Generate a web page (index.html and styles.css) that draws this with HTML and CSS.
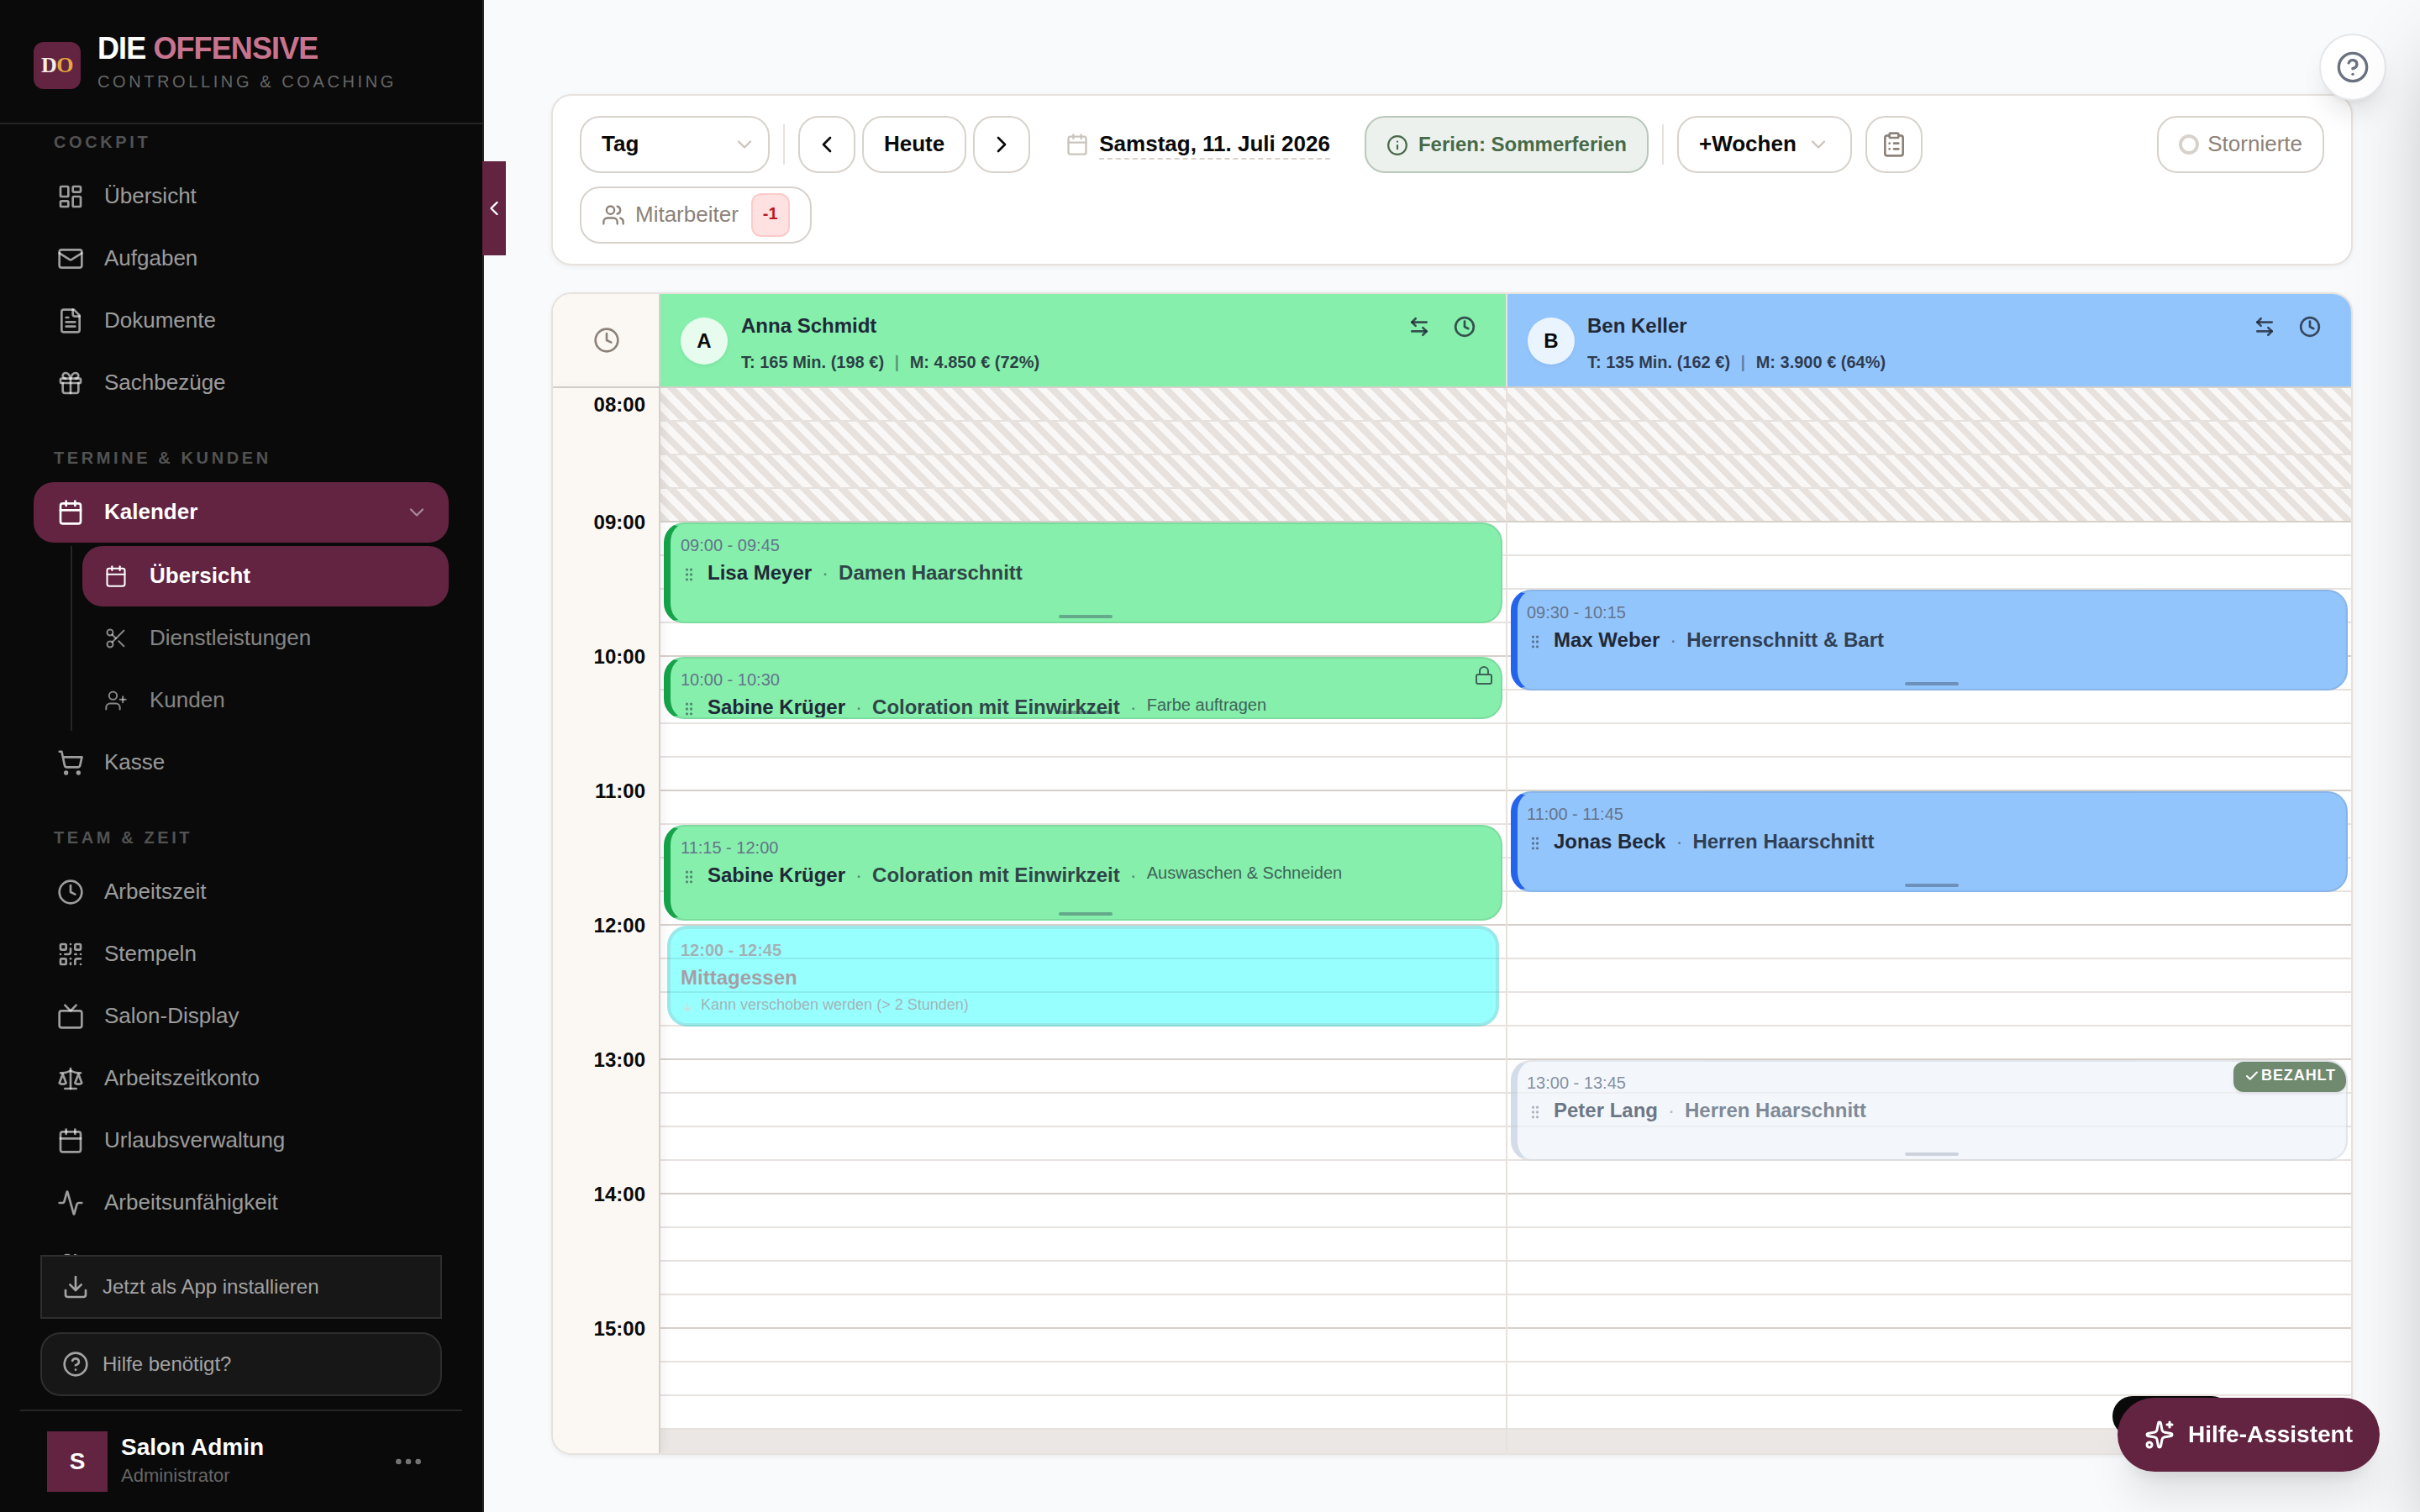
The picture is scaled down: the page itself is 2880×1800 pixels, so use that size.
FILE: index.html
```
<!DOCTYPE html>
<html lang="de">

<head>
  <meta charset="UTF-8" />
  <meta name="viewport" content="width=device-width, initial-scale=1.0" />
  <title>Kalender - Die Offensive</title>
  <link rel="stylesheet" href="styles.css">
</head>

<body>
  <!-- Icons -->
  <svg class="sprite" aria-hidden="true">
    <symbol id="i-dashboard" viewBox="0 0 24 24"><rect width="7" height="9" x="3" y="3" rx="1"/><rect width="7" height="5" x="14" y="3" rx="1"/><rect width="7" height="9" x="14" y="12" rx="1"/><rect width="7" height="5" x="3" y="16" rx="1"/></symbol>
    <symbol id="i-mail" viewBox="0 0 24 24"><rect width="20" height="16" x="2" y="4" rx="2"/><path d="m22 7-8.991 5.727a2 2 0 0 1-2.009 0L2 7"/></symbol>
    <symbol id="i-file" viewBox="0 0 24 24"><path d="M15 2H6a2 2 0 0 0-2 2v16a2 2 0 0 0 2 2h12a2 2 0 0 0 2-2V7Z"/><path d="M14 2v4a2 2 0 0 0 2 2h4"/><path d="M10 9H8"/><path d="M16 13H8"/><path d="M16 17H8"/></symbol>
    <symbol id="i-gift" viewBox="0 0 24 24"><rect x="3" y="8" width="18" height="4" rx="1"/><path d="M12 8v13"/><path d="M19 12v7a2 2 0 0 1-2 2H7a2 2 0 0 1-2-2v-7"/><path d="M7.5 8a2.5 2.5 0 0 1 0-5A4.8 8 0 0 1 12 8a4.8 8 0 0 1 4.5-5 2.5 2.5 0 0 1 0 5"/></symbol>
    <symbol id="i-calendar" viewBox="0 0 24 24"><path d="M8 2v4"/><path d="M16 2v4"/><rect width="18" height="18" x="3" y="4" rx="2"/><path d="M3 10h18"/></symbol>
    <symbol id="i-scissors" viewBox="0 0 24 24"><circle cx="6" cy="6" r="3"/><path d="M8.12 8.12 12 12"/><path d="M20 4 8.12 15.88"/><circle cx="6" cy="18" r="3"/><path d="M14.8 14.8 20 20"/></symbol>
    <symbol id="i-user-plus" viewBox="0 0 24 24"><path d="M16 21v-2a4 4 0 0 0-4-4H6a4 4 0 0 0-4 4v2"/><circle cx="9" cy="7" r="4"/><path d="M19 8v6"/><path d="M22 11h-6"/></symbol>
    <symbol id="i-cart" viewBox="0 0 24 24"><circle cx="8" cy="21" r="1"/><circle cx="19" cy="21" r="1"/><path d="M2.05 2.05h2l2.66 12.42a2 2 0 0 0 2 1.58h9.78a2 2 0 0 0 1.95-1.57l1.65-7.43H5.12"/></symbol>
    <symbol id="i-clock" viewBox="0 0 24 24"><circle cx="12" cy="12" r="10"/><path d="M12 6v6l4 2"/></symbol>
    <symbol id="i-qr" viewBox="0 0 24 24"><rect width="5" height="5" x="3" y="3" rx="1"/><rect width="5" height="5" x="16" y="3" rx="1"/><rect width="5" height="5" x="3" y="16" rx="1"/><path d="M21 16h-3a2 2 0 0 0-2 2v3"/><path d="M21 21v.01"/><path d="M12 7v3a2 2 0 0 1-2 2H7"/><path d="M3 12h.01"/><path d="M12 3h.01"/><path d="M12 16v.01"/><path d="M16 12h1"/><path d="M21 12v.01"/><path d="M12 21v-1"/></symbol>
    <symbol id="i-tv" viewBox="0 0 24 24"><rect width="20" height="15" x="2" y="7" rx="2"/><path d="m17 2-5 5-5-5"/></symbol>
    <symbol id="i-scale" viewBox="0 0 24 24"><path d="m16 16 3-8 3 8c-.87.65-1.92 1-3 1s-2.13-.35-3-1Z"/><path d="m2 16 3-8 3 8c-.87.65-1.92 1-3 1s-2.13-.35-3-1Z"/><path d="M7 21h10"/><path d="M12 3v18"/><path d="M3 7h2c2 0 5-1 7-2 2 1 5 2 7 2h2"/></symbol>
    <symbol id="i-activity" viewBox="0 0 24 24"><path d="M22 12h-2.48a2 2 0 0 0-1.93 1.46l-2.35 8.36a.25.25 0 0 1-.48 0L9.24 2.18a.25.25 0 0 0-.48 0l-2.35 8.36A2 2 0 0 1 4.49 12H2"/></symbol>
    <symbol id="i-users" viewBox="0 0 24 24"><path d="M16 21v-2a4 4 0 0 0-4-4H6a4 4 0 0 0-4 4v2"/><circle cx="9" cy="7" r="4"/><path d="M22 21v-2a4 4 0 0 0-3-3.87"/><path d="M16 3.13a4 4 0 0 1 0 7.75"/></symbol>
    <symbol id="i-download" viewBox="0 0 24 24"><path d="M21 15v4a2 2 0 0 1-2 2H5a2 2 0 0 1-2-2v-4"/><path d="m7 10 5 5 5-5"/><path d="M12 15V3"/></symbol>
    <symbol id="i-help" viewBox="0 0 24 24"><circle cx="12" cy="12" r="10"/><path d="M9.09 9a3 3 0 0 1 5.83 1c0 2-3 3-3 3"/><path d="M12 17h.01"/></symbol>
    <symbol id="i-info" viewBox="0 0 24 24"><circle cx="12" cy="12" r="10"/><path d="M12 16v-4"/><path d="M12 8h.01"/></symbol>
    <symbol id="i-dots" viewBox="0 0 24 24"><circle cx="12" cy="12" r="1"/><circle cx="19" cy="12" r="1"/><circle cx="5" cy="12" r="1"/></symbol>
    <symbol id="i-left" viewBox="0 0 24 24"><path d="m15 18-6-6 6-6"/></symbol>
    <symbol id="i-right" viewBox="0 0 24 24"><path d="m9 18 6-6-6-6"/></symbol>
    <symbol id="i-down" viewBox="0 0 24 24"><path d="m6 9 6 6 6-6"/></symbol>
    <symbol id="i-clipboard" viewBox="0 0 24 24"><rect width="8" height="4" x="8" y="2" rx="1"/><path d="M16 4h2a2 2 0 0 1 2 2v14a2 2 0 0 1-2 2H6a2 2 0 0 1-2-2V6a2 2 0 0 1 2-2h2"/><path d="M12 11h4"/><path d="M12 16h4"/><path d="M8 11h.01"/><path d="M8 16h.01"/></symbol>
    <symbol id="i-swap" viewBox="0 0 24 24"><path d="M8 3 4 7l4 4"/><path d="M4 7h16"/><path d="m16 21 4-4-4-4"/><path d="M20 17H4"/></symbol>
    <symbol id="i-grip" viewBox="0 0 24 24"><circle cx="9" cy="12" r="1"/><circle cx="9" cy="5" r="1"/><circle cx="9" cy="19" r="1"/><circle cx="15" cy="12" r="1"/><circle cx="15" cy="5" r="1"/><circle cx="15" cy="19" r="1"/></symbol>
    <symbol id="i-lock" viewBox="0 0 24 24"><rect width="18" height="11" x="3" y="11" rx="2"/><path d="M7 11V7a5 5 0 0 1 10 0v4"/></symbol>
    <symbol id="i-arrow-down" viewBox="0 0 24 24"><path d="M12 5v14"/><path d="m19 12-7 7-7-7"/></symbol>
    <symbol id="i-check" viewBox="0 0 24 24"><path d="M20 6 9 17l-5-5"/></symbol>
    <symbol id="i-sparkles" viewBox="0 0 24 24"><path d="M11.017 2.814a1 1 0 0 1 1.966 0l1.051 5.558a2 2 0 0 0 1.594 1.594l5.558 1.051a1 1 0 0 1 0 1.966l-5.558 1.051a2 2 0 0 0-1.594 1.594l-1.051 5.558a1 1 0 0 1-1.966 0l-1.051-5.558a2 2 0 0 0-1.594-1.594l-5.558-1.051a1 1 0 0 1 0-1.966l5.558-1.051a2 2 0 0 0 1.594-1.594z"/><path d="M20 2v4"/><path d="M22 4h-4"/><circle cx="4" cy="20" r="2"/></symbol>
  </svg>

  <div class="app">
    <aside class="sidebar">
      <div class="brand">
        <div class="brand-logo"><span>D</span><span class="gold">O</span></div>
        <div class="brand-text">
          <div class="brand-name">DIE <span>OFFENSIVE</span></div>
          <div class="brand-sub">CONTROLLING &amp; COACHING</div>
        </div>
      </div>

      <nav class="nav">
        <div class="nav-section">
          <div class="nav-title">COCKPIT</div>
          <a class="nav-item"><svg class="icon"><use href="#i-dashboard"/></svg>Übersicht</a>
          <a class="nav-item"><svg class="icon"><use href="#i-mail"/></svg>Aufgaben</a>
          <a class="nav-item"><svg class="icon"><use href="#i-file"/></svg>Dokumente</a>
          <a class="nav-item"><svg class="icon"><use href="#i-gift"/></svg>Sachbezüge</a>
        </div>
        <div class="nav-section">
          <div class="nav-title">TERMINE &amp; KUNDEN</div>
          <a class="nav-item active"><svg class="icon"><use href="#i-calendar"/></svg>Kalender<svg class="icon caret"><use href="#i-down"/></svg></a>
          <div class="subnav">
            <a class="nav-item active"><svg class="icon"><use href="#i-calendar"/></svg>Übersicht</a>
            <a class="nav-item"><svg class="icon"><use href="#i-scissors"/></svg>Dienstleistungen</a>
            <a class="nav-item"><svg class="icon"><use href="#i-user-plus"/></svg>Kunden</a>
          </div>
          <a class="nav-item"><svg class="icon"><use href="#i-cart"/></svg>Kasse</a>
        </div>
        <div class="nav-section">
          <div class="nav-title">TEAM &amp; ZEIT</div>
          <a class="nav-item"><svg class="icon"><use href="#i-clock"/></svg>Arbeitszeit</a>
          <a class="nav-item"><svg class="icon"><use href="#i-qr"/></svg>Stempeln</a>
          <a class="nav-item"><svg class="icon"><use href="#i-tv"/></svg>Salon-Display</a>
          <a class="nav-item"><svg class="icon"><use href="#i-scale"/></svg>Arbeitszeitkonto</a>
          <a class="nav-item"><svg class="icon"><use href="#i-calendar"/></svg>Urlaubsverwaltung</a>
          <a class="nav-item"><svg class="icon"><use href="#i-activity"/></svg>Arbeitsunfähigkeit</a>
          <a class="nav-item"><svg class="icon"><use href="#i-users"/></svg></a>
        </div>
      </nav>

      <div class="side-actions">
        <button class="side-btn"><svg class="icon"><use href="#i-download"/></svg>Jetzt als App installieren</button>
        <button class="side-btn rounded"><svg class="icon"><use href="#i-help"/></svg>Hilfe benötigt?</button>
      </div>

      <div class="user">
        <div class="user-avatar">S</div>
        <div class="user-info">
          <div class="user-name">Salon Admin</div>
          <div class="user-role">Administrator</div>
        </div>
        <svg class="icon user-menu"><use href="#i-dots"/></svg>
      </div>

      <button class="collapse"><svg class="icon"><use href="#i-left"/></svg></button>
    </aside>

    <main class="main">
      <div class="toolbar">
        <div class="toolbar-row">
          <button class="btn select">Tag<svg class="icon muted"><use href="#i-down"/></svg></button>
          <span class="divider"></span>
          <div class="pager">
            <button class="btn square"><svg class="icon"><use href="#i-left"/></svg></button>
            <button class="btn">Heute</button>
            <button class="btn square"><svg class="icon"><use href="#i-right"/></svg></button>
          </div>
          <div class="date"><svg class="icon muted"><use href="#i-calendar"/></svg><span>Samstag, 11. Juli 2026</span></div>
          <div class="btn holiday"><svg class="icon"><use href="#i-info"/></svg>Ferien: Sommerferien</div>
          <span class="divider"></span>
          <button class="btn weeks">+Wochen<svg class="icon muted"><use href="#i-down"/></svg></button>
          <button class="btn square soft"><svg class="icon"><use href="#i-clipboard"/></svg></button>
          <button class="btn soft cancelled"><span class="ring"></span>Stornierte</button>
        </div>
        <div class="toolbar-row">
          <button class="btn soft staff"><svg class="icon"><use href="#i-users"/></svg>Mitarbeiter<span class="count">-1</span></button>
        </div>
      </div>

      <div class="calendar">
        <div class="cal-head">
          <div class="corner"><svg class="icon"><use href="#i-clock"/></svg></div>
          <div class="person green">
            <div class="avatar">A</div>
            <div class="person-info">
              <div class="person-name">Anna Schmidt</div>
              <div class="person-stats">T: 165 Min. (198 €)<i>|</i>M: 4.850 € (72%)</div>
            </div>
            <div class="person-tools"><svg class="icon"><use href="#i-swap"/></svg><svg class="icon"><use href="#i-clock"/></svg></div>
          </div>
          <div class="person blue">
            <div class="avatar">B</div>
            <div class="person-info">
              <div class="person-name">Ben Keller</div>
              <div class="person-stats">T: 135 Min. (162 €)<i>|</i>M: 3.900 € (64%)</div>
            </div>
            <div class="person-tools"><svg class="icon"><use href="#i-swap"/></svg><svg class="icon"><use href="#i-clock"/></svg></div>
          </div>
        </div>

        <div class="cal-body">
          <div class="times">
            <div class="hour"><span>08:00</span></div>
            <div class="hour"><span>09:00</span></div>
            <div class="hour"><span>10:00</span></div>
            <div class="hour"><span>11:00</span></div>
            <div class="hour"><span>12:00</span></div>
            <div class="hour"><span>13:00</span></div>
            <div class="hour"><span>14:00</span></div>
            <div class="hour"><span>15:00</span></div>
          </div>

          <div class="day">
            <div class="event green" style="top: 160px; height: 120px">
              <div class="event-time">09:00 - 09:45</div>
              <div class="event-row"><svg class="icon"><use href="#i-grip"/></svg><b>Lisa Meyer</b><i>·</i><span class="service">Damen Haarschnitt</span></div>
              <span class="handle"></span>
            </div>
            <div class="event green" style="top: 320px; height: 74px">
              <div class="event-time">10:00 - 10:30</div>
              <div class="event-row"><svg class="icon"><use href="#i-grip"/></svg><b>Sabine Krüger</b><i>·</i><span class="service">Coloration mit Einwirkzeit</span><i>·</i><span class="step">Farbe auftragen</span></div>
              <svg class="icon lock"><use href="#i-lock"/></svg>
              <span class="handle"></span>
            </div>
            <div class="event green" style="top: 520px; height: 114px">
              <div class="event-time">11:15 - 12:00</div>
              <div class="event-row"><svg class="icon"><use href="#i-grip"/></svg><b>Sabine Krüger</b><i>·</i><span class="service">Coloration mit Einwirkzeit</span><i>·</i><span class="step">Auswaschen &amp; Schneiden</span></div>
              <span class="handle"></span>
            </div>
            <div class="break" style="top: 640px; height: 120px">
              <div class="break-time">12:00 - 12:45</div>
              <div class="break-title">Mittagessen</div>
              <div class="break-note"><svg class="icon"><use href="#i-arrow-down"/></svg><span>Kann verschoben werden (&gt; 2 Stunden)</span></div>
            </div>
          </div>

          <div class="day">
            <div class="event blue" style="top: 240px; height: 120px">
              <div class="event-time">09:30 - 10:15</div>
              <div class="event-row"><svg class="icon"><use href="#i-grip"/></svg><b>Max Weber</b><i>·</i><span class="service">Herrenschnitt &amp; Bart</span></div>
              <span class="handle"></span>
            </div>
            <div class="event blue" style="top: 480px; height: 120px">
              <div class="event-time">11:00 - 11:45</div>
              <div class="event-row"><svg class="icon"><use href="#i-grip"/></svg><b>Jonas Beck</b><i>·</i><span class="service">Herren Haarschnitt</span></div>
              <span class="handle"></span>
            </div>
            <div class="event paid" style="top: 800px; height: 120px">
              <div class="event-time">13:00 - 13:45</div>
              <div class="event-row"><svg class="icon"><use href="#i-grip"/></svg><b>Peter Lang</b><i>·</i><span class="service">Herren Haarschnitt</span></div>
              <span class="handle"></span>
            </div>
            <div class="paid-badge" style="top: 802px"><svg class="icon"><use href="#i-check"/></svg>BEZAHLT</div>
          </div>
        </div>
      </div>
    </main>
  </div>

  <button class="help-btn"><svg class="icon"><use href="#i-help"/></svg></button>
  <div class="toast"></div>
  <button class="assistant"><svg class="icon"><use href="#i-sparkles"/></svg>Hilfe-Assistent</button>
  <div class="drawer"></div>

  <script>
    // quarter-hour slots from 08:00 to 15:45, the salon opens at 09:00
    document.querySelectorAll(".day").forEach((day) => {
      const slots = document.createElement("div");
      slots.className = "slots";
      for (let i = 0; i < 31; i++) {
        const slot = document.createElement("div");
        slot.className = "slot";
        if (i < 4) slot.classList.add("closed");
        if (i % 4 === 3) slot.classList.add("full");
        slots.appendChild(slot);
      }
      const rest = document.createElement("div");
      rest.className = "slot-rest";
      slots.appendChild(rest);
      day.prepend(slots);
    });
  </script>
</body>

</html>
```

FILE: styles.css
```
* {
  box-sizing: border-box;
}

body {
  margin: 0;
  font-family: "Liberation Sans", Arial, sans-serif;
  background: #f9fafc;
  color: #0a0a0a;
  overflow: hidden;
}

button {
  font-family: inherit;
  margin: 0;
  cursor: pointer;
}

.sprite {
  position: absolute;
  width: 0;
  height: 0;
}

.icon {
  width: 32px;
  height: 32px;
  flex-shrink: 0;
  fill: none;
  stroke: currentColor;
  stroke-width: 2;
  stroke-linecap: round;
  stroke-linejoin: round;
}

.app {
  display: flex;
  height: 1800px;
}

/* Sidebar */
.sidebar {
  position: relative;
  width: 576px;
  flex-shrink: 0;
  display: flex;
  flex-direction: column;
  background: #0a0a0a;
  border-right: 2px solid #262626;
}

.brand {
  display: flex;
  align-items: center;
  gap: 20px;
  height: 148px;
  padding-left: 40px;
  border-bottom: 2px solid #262626;
}

.brand-logo {
  display: flex;
  align-items: center;
  justify-content: center;
  width: 56px;
  height: 56px;
  margin-top: 10px;
  border-radius: 12px;
  background: #622441;
  color: #f5ede6;
  font: bold 26px "Liberation Serif", serif;
  letter-spacing: -0.5px;
}

.brand-logo .gold {
  color: #e5a93d;
}

.brand-text {
  margin-top: 2px;
}

.brand-name {
  font-size: 36px;
  font-weight: bold;
  line-height: 40px;
  letter-spacing: -0.025em;
  color: #fff;
}

.brand-name span {
  color: #c9748f;
}

.brand-sub {
  margin-top: 6px;
  font-size: 20px;
  line-height: 26px;
  letter-spacing: 0.18em;
  color: #666;
}

.nav {
  flex: 1;
  min-height: 0;
  overflow: hidden;
  padding: 6px 40px 0;
}

.nav-section {
  display: flex;
  flex-direction: column;
  gap: 2px;
  margin-bottom: 38px;
}

.nav-title {
  padding-left: 24px;
  margin-bottom: 12px;
  font-size: 20px;
  font-weight: bold;
  line-height: 30px;
  letter-spacing: 0.18em;
  color: #525252;
}

.nav-item {
  display: flex;
  align-items: center;
  gap: 24px;
  height: 72px;
  padding: 0 28px 2px;
  border-radius: 24px;
  font-size: 26px;
  color: rgba(255, 255, 255, 0.6);
}

.nav-item .icon {
  margin-top: 2px;
}

.nav-item.active {
  background: #622441;
  color: #fff;
  font-weight: bold;
}

.nav-item .caret {
  width: 28px;
  height: 28px;
  margin-left: auto;
  margin-right: -4px;
  opacity: 0.45;
}

.subnav {
  display: flex;
  flex-direction: column;
  gap: 2px;
  margin: 2px 0 0 44px;
  padding-left: 12px;
  border-left: 2px solid #262626;
}

.subnav .nav-item {
  gap: 26px;
  padding: 0 26px 2px;
  color: rgba(255, 255, 255, 0.5);
}

.subnav .nav-item.active {
  color: #fff;
}

.subnav .icon {
  width: 28px;
  height: 28px;
  stroke-width: 1.75;
}

.side-actions {
  display: flex;
  flex-direction: column;
  gap: 16px;
  padding: 0 48px 16px;
}

.side-btn {
  display: flex;
  align-items: center;
  gap: 16px;
  height: 76px;
  padding: 0 24px;
  background: #171717;
  border: 2px solid #2e2e2e;
  color: #a3a3a3;
  font-size: 24px;
}

.side-btn.rounded {
  border-radius: 24px;
}

.user {
  display: flex;
  align-items: center;
  gap: 16px;
  height: 122px;
  margin: 0 24px;
  padding: 0 44px 0 32px;
  border-top: 2px solid #262626;
}

.user-avatar {
  display: flex;
  align-items: center;
  justify-content: center;
  width: 72px;
  height: 72px;
  background: #622441;
  color: #fff;
  font-size: 28px;
  font-weight: bold;
}

.user-info {
  flex: 1;
  margin-bottom: 2px;
}

.user-name {
  font-size: 28px;
  font-weight: bold;
  line-height: 36px;
  color: #fff;
}

.user-role {
  font-size: 22px;
  line-height: 32px;
  color: #666;
}

.user-menu {
  width: 40px;
  height: 40px;
  color: #737373;
}

.collapse {
  position: absolute;
  top: 192px;
  right: -28px;
  display: flex;
  align-items: center;
  justify-content: center;
  width: 28px;
  height: 112px;
  padding: 0;
  border: none;
  background: #622441;
  color: #fff;
}

.collapse .icon {
  width: 28px;
  height: 28px;
}

/* Main */
.main {
  flex: 1;
  display: flex;
  flex-direction: column;
  gap: 32px;
  padding: 112px 80px 68px;
}

.toolbar,
.calendar {
  border: 2px solid #e7e2de;
  border-radius: 24px;
  background: #fff;
  box-shadow: 0 2px 6px rgba(0, 0, 0, 0.06);
}

.toolbar {
  display: flex;
  flex-direction: column;
  gap: 16px;
  padding: 24px 32px;
}

.toolbar-row {
  display: flex;
  align-items: center;
  gap: 16px;
}

.btn {
  display: flex;
  align-items: center;
  justify-content: center;
  gap: 12px;
  height: 68px;
  padding: 0 24px 2px;
  border: 2px solid #d8d2cc;
  border-radius: 24px;
  background: #fff;
  color: #0a0a0a;
  font-size: 26px;
  font-weight: bold;
}

.btn .icon,
.date .icon {
  width: 28px;
  height: 28px;
}

.btn .icon,
.btn .ring {
  margin-top: 2px;
}

.btn.square {
  width: 68px;
  padding: 0 0 2px;
}

.btn.square .icon {
  width: 32px;
  height: 32px;
}

.btn.select {
  width: 226px;
  justify-content: space-between;
  padding-right: 14px;
}

.icon.muted {
  color: #cac4bd;
}

.btn.soft {
  color: #8c8279;
  font-weight: normal;
}

.divider {
  width: 2px;
  height: 48px;
  background: #e7e2de;
}

.pager {
  display: flex;
  gap: 8px;
}

.date {
  display: flex;
  align-items: center;
  gap: 12px;
  padding: 0 25px 0 26px;
  font-size: 26px;
  font-weight: bold;
}

.date span {
  margin-top: 3px;
  padding-bottom: 2px;
  line-height: 29px;
  border-bottom: 2px dashed #d8d2cc;
}

.btn.holiday {
  padding-bottom: 0;
  background: #ecf1ed;
  border-color: #b9c8bb;
  color: #476a48;
  font-size: 24px;
}

.holiday .icon {
  width: 26px;
  height: 26px;
}

.btn.cancelled {
  gap: 10px;
  margin-left: auto;
}

.ring {
  width: 24px;
  height: 24px;
  border: 4px solid #d8d2cc;
  border-radius: 50%;
}

.count {
  height: 52px;
  margin: 2px 0 0 3px;
  padding: 0 12px;
  border: 2px solid #fecaca;
  border-radius: 12px;
  background: #fee2e2;
  color: #b91c1c;
  font-size: 20px;
  font-weight: bold;
  line-height: 44px;
}

/* Calendar */
.calendar {
  flex: 1;
  min-height: 0;
  display: flex;
  flex-direction: column;
  overflow: hidden;
}

.cal-head,
.cal-body {
  display: grid;
  grid-template-columns: 128px 1008px 1fr;
}

.cal-head {
  flex-shrink: 0;
  height: 112px;
  border-bottom: 2px solid #d6d0cb;
}

.cal-body {
  flex: 1;
  min-height: 0;
  grid-template-rows: 100%;
}

.corner {
  display: flex;
  align-items: center;
  justify-content: center;
  padding-left: 2px;
  background: #fbf8f4;
  border-right: 2px solid #d6d0cb;
  color: #8c8279;
}

.person {
  display: flex;
  align-items: center;
  gap: 16px;
  padding: 0 36px 0 24px;
}

.person.green {
  background: #86efac;
  border-right: 2px solid #e7e2de;
}

.person.blue {
  gap: 15px;
  background: #93c5fd;
}

.avatar {
  display: flex;
  align-items: center;
  justify-content: center;
  width: 56px;
  height: 56px;
  margin-top: 2px;
  border-radius: 50%;
  background: rgba(255, 255, 255, 0.8);
  box-shadow: 0 2px 4px rgba(0, 0, 0, 0.06);
  font-size: 24px;
  font-weight: bold;
}

.person-info {
  flex: 1;
}

.person-name {
  margin-top: 6px;
  font-size: 24px;
  font-weight: bold;
  line-height: 36px;
  color: #1f2937;
}

.person-stats {
  margin-top: 10px;
  font-size: 20px;
  font-weight: bold;
  line-height: 30px;
  color: rgba(31, 41, 55, 0.88);
}

.person-stats i {
  margin: 0 12.5px;
  font-style: normal;
  opacity: 0.5;
}

.person-tools {
  display: flex;
  gap: 28px;
  margin-bottom: 32px;
  color: rgba(31, 41, 55, 0.8);
}

.person-tools .icon {
  width: 26px;
  height: 26px;
  stroke-width: 2.5;
}

.times {
  position: relative;
  z-index: 2;
  background: #fbf8f4;
  border-right: 2px solid #d6d0cb;
  box-shadow: 4px 0 12px rgba(0, 0, 0, 0.05);
}

.hour {
  height: 160px;
  padding-right: 16px;
  text-align: right;
  font-size: 24px;
  font-weight: bold;
  line-height: 28px;
}

.hour span {
  display: block;
  transform: translateY(-14px);
}

.hour:first-child span {
  transform: translateY(6px);
}

.day {
  position: relative;
}

.day:nth-child(2) {
  border-right: 2px solid #e7e2de;
}

.slots {
  display: flex;
  flex-direction: column;
  height: 100%;
}

.slot {
  height: 40px;
  flex-shrink: 0;
  border-bottom: 2px solid #e7e2de;
}

.slot.full {
  border-bottom-color: #d6d0cb;
}

.slot.closed {
  background: repeating-linear-gradient(45deg, #e7e2de, #e7e2de 8px, #faf8f6 8px, #faf8f6 16px);
}

.slot-rest {
  flex: 1;
  background: #ebe7e4;
}

.event {
  position: absolute;
  left: 4px;
  right: 4px;
  padding: 10px 12px;
  border: 2px solid rgba(0, 0, 0, 0.08);
  border-left-width: 8px;
  border-radius: 24px;
  overflow: hidden;
  color: #1f2937;
}

.day:last-child .event {
  padding-left: 11px;
}

.event.green {
  background-color: #86efac;
  border-left-color: #16a34a;
}

.event.blue {
  background-color: #93c5fd;
  border-left-color: #2563eb;
}

.event.paid {
  background-color: #eff4fb;
  border-color: rgba(0, 0, 0, 0.1);
  border-left-color: #c3cfdd;
  color: #2f3e53;
  opacity: 0.7;
}

.event-time {
  font-size: 20px;
  line-height: 30px;
  color: #64748b;
}

.paid .event-time {
  color: #526279;
}

.event-row {
  display: flex;
  align-items: center;
  gap: 12px;
  height: 36px;
  font-size: 24px;
  white-space: nowrap;
}

.event-row .icon {
  width: 20px;
  height: 20px;
  margin-top: 4px;
  opacity: 0.5;
}

.event-row i {
  font-style: normal;
  opacity: 0.5;
}

.event-row .service {
  font-weight: bold;
  opacity: 0.85;
}

.event-row .step {
  margin-bottom: 5px;
  font-size: 20px;
  opacity: 0.7;
}

.event .lock {
  position: absolute;
  top: 8px;
  right: 8px;
  width: 24px;
  height: 24px;
  opacity: 0.7;
}

.handle {
  position: absolute;
  bottom: 4px;
  left: 50%;
  width: 64px;
  height: 4px;
  margin-left: -32px;
  border-radius: 2px;
  background: #334155;
  opacity: 0.4;
}

.paid .handle {
  background: #64748b;
}

.paid-badge {
  position: absolute;
  right: 6px;
  display: flex;
  align-items: center;
  gap: 2px;
  height: 36px;
  padding: 0 12px 3px 13px;
  border-radius: 12px 22px 12px 12px;
  background: #6f8a6e;
  box-shadow: 0 2px 4px rgba(0, 0, 0, 0.08);
  color: #fff;
  font-size: 18px;
  font-weight: bold;
  letter-spacing: 0.05em;
}

.paid-badge .icon {
  width: 18px;
  height: 18px;
  stroke-width: 2.75;
}

.break {
  position: absolute;
  left: 8px;
  right: 8px;
  padding: 10px 12px;
  border: 4px solid rgba(0, 0, 0, 0.2);
  border-radius: 24px;
  background-color: #0ff;
  opacity: 0.4;
  color: #1f1020;
}

.break-time {
  font-size: 20px;
  font-weight: bold;
  line-height: 30px;
  opacity: 0.8;
}

.break-title {
  font-size: 24px;
  font-weight: bold;
  line-height: 36px;
}

.break-note {
  display: flex;
  align-items: center;
  gap: 8px;
  font-size: 18px;
  line-height: 28px;
}

.break-note span {
  opacity: 0.8;
}

.break-note .icon {
  width: 16px;
  height: 16px;
  margin-top: 5px;
  color: #a8a29e;
}

/* Floating */
.help-btn {
  position: fixed;
  top: 40px;
  right: 40px;
  display: flex;
  align-items: center;
  justify-content: center;
  width: 80px;
  height: 80px;
  padding: 0;
  border: 2px solid #e5e7eb;
  border-radius: 50%;
  background: #fff;
  color: #6b7280;
  box-shadow: 0 20px 30px -6px rgba(0, 0, 0, 0.1), 0 8px 12px -8px rgba(0, 0, 0, 0.1);
}

.help-btn .icon {
  width: 40px;
  height: 40px;
}

.toast {
  position: fixed;
  right: 224px;
  bottom: 90px;
  width: 142px;
  height: 48px;
  border-radius: 24px;
  background: #0a0a0a;
}

.assistant {
  position: fixed;
  right: 48px;
  bottom: 48px;
  display: flex;
  align-items: center;
  gap: 16px;
  height: 88px;
  padding: 0 32px;
  border: none;
  border-radius: 44px;
  background: #622441;
  color: #fff;
  font-size: 28px;
  font-weight: bold;
  box-shadow: 0 40px 50px -10px rgba(0, 0, 0, 0.1), 0 16px 20px -12px rgba(0, 0, 0, 0.1);
}

.assistant .icon {
  width: 36px;
  height: 36px;
}

/* closed drawer, only its shadow reaches into the page */
.drawer {
  position: fixed;
  top: 0;
  left: 100%;
  width: 800px;
  height: 100%;
  box-shadow: 0 50px 100px -24px rgba(0, 0, 0, 0.3);
}
```
